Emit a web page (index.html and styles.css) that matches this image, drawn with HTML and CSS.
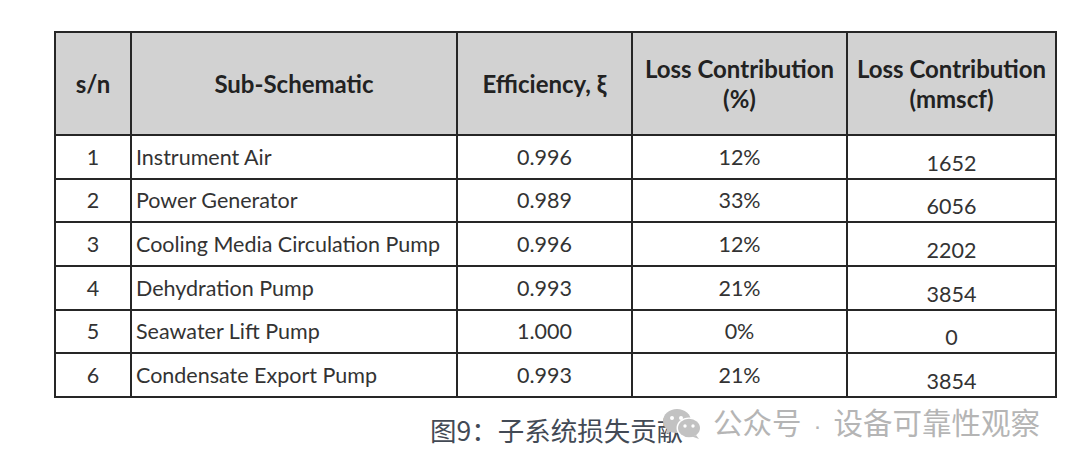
FILE: index.html
```html
<!DOCTYPE html>
<html lang="zh">
<head>
<meta charset="utf-8">
<title>子系统损失贡献</title>
<link rel="stylesheet" href="styles.css">
</head>
<body>
<div class="page">
  <table class="loss-table">
    <colgroup>
      <col class="c-sn">
      <col class="c-name">
      <col class="c-eff">
      <col class="c-pct">
      <col class="c-vol">
    </colgroup>
    <thead>
      <tr class="head-row">
        <th>s/n</th>
        <th>Sub-Schematic</th>
        <th>Efficiency, ξ</th>
        <th>Loss Contribution<br>(%)</th>
        <th>Loss Contribution<br>(mmscf)</th>
      </tr>
    </thead>
    <tbody>
      <tr><td class="sn">1</td><td class="name">Instrument Air</td><td>0.996</td><td>12%</td><td class="vol">1652</td></tr>
      <tr><td class="sn">2</td><td class="name">Power Generator</td><td>0.989</td><td>33%</td><td class="vol">6056</td></tr>
      <tr><td class="sn">3</td><td class="name">Cooling Media Circulation Pump</td><td>0.996</td><td>12%</td><td class="vol">2202</td></tr>
      <tr><td class="sn">4</td><td class="name">Dehydration Pump</td><td>0.993</td><td>21%</td><td class="vol">3854</td></tr>
      <tr><td class="sn">5</td><td class="name">Seawater Lift Pump</td><td>1.000</td><td>0%</td><td class="vol">0</td></tr>
      <tr><td class="sn">6</td><td class="name">Condensate Export Pump</td><td>0.993</td><td>21%</td><td class="vol">3854</td></tr>
    </tbody>
  </table>
  <p class="caption">图9：子系统损失贡献</p>
  <div class="watermark">
    <svg class="wx-icon" viewBox="0 0 40 32" width="40" height="32" aria-hidden="true">
      <ellipse cx="15" cy="13" rx="14" ry="12" fill="#c2c2c2"/>
      <path d="M5 21 L3 27 L10 23 Z" fill="#c2c2c2"/>
      <circle cx="10" cy="10" r="2" fill="#fff"/>
      <circle cx="19" cy="10" r="2" fill="#fff"/>
      <ellipse cx="27" cy="20" rx="12.5" ry="10.5" fill="#fff"/>
      <ellipse cx="27" cy="20" rx="11" ry="9.2" fill="#c2c2c2"/>
      <path d="M34 27 L37 31 L30 28.5 Z" fill="#c2c2c2"/>
      <circle cx="23" cy="18" r="1.7" fill="#fff"/>
      <circle cx="31" cy="18" r="1.7" fill="#fff"/>
    </svg>
    <span class="wx-text">公众号<span class="wx-dot">·</span>设备可靠性观察</span>
  </div>
</div>
</body>
</html>
```

FILE: styles.css
```css
html, body {
  margin: 0;
  padding: 0;
  background: #ffffff;
}

.page {
  position: relative;
  width: 1080px;
  height: 466px;
  padding: 31px 0 0 54px;
  box-sizing: border-box;
  overflow: hidden;
}

.loss-table {
  border-collapse: collapse;
  table-layout: fixed;
  width: 1001px;
  font-family: "Lato", "Open Sans", sans-serif;
  font-size: 21.5px;
  color: #333333;
}

.c-sn { width: 76px; }
.c-name { width: 326px; }
.c-eff { width: 175px; }
.c-pct { width: 215px; }
.c-vol { width: 209px; }

.loss-table th,
.loss-table td {
  border: 2px solid #262626;
  text-align: center;
  padding: 0 4px;
}

.head-row {
  height: 103px;
}

.loss-table tbody tr {
  height: 43.67px;
}

.loss-table th {
  background: #d2d2d2;
  font-weight: 700;
  color: #222222;
  line-height: 30px;
  font-size: 24px;
}

.loss-table td {
  line-height: 24px;
  vertical-align: middle;
}

.loss-table td.name {
  text-align: left;
  padding-left: 4px;
}

.loss-table td.vol {
  vertical-align: bottom;
  padding-bottom: 3px;
}

.caption {
  margin: 16px 0 0 376px;
  font-family: "Noto Sans CJK SC", sans-serif;
  font-size: 26.5px;
  line-height: 32px;
  color: #434a55;
}

.watermark {
  position: absolute;
  left: 662px;
  top: 404px;
  display: flex;
  align-items: center;
  gap: 11px;
}

.wx-icon {
  display: block;
}

.wx-text {
  font-family: "Noto Sans CJK SC", sans-serif;
  font-size: 29.5px;
  line-height: 34px;
  color: #b5b5b5;
  white-space: pre;
}

.wx-dot {
  display: inline-block;
  width: 32px;
  text-align: center;
  font-family: "Liberation Sans", sans-serif;
  font-size: 24px;
}
```
